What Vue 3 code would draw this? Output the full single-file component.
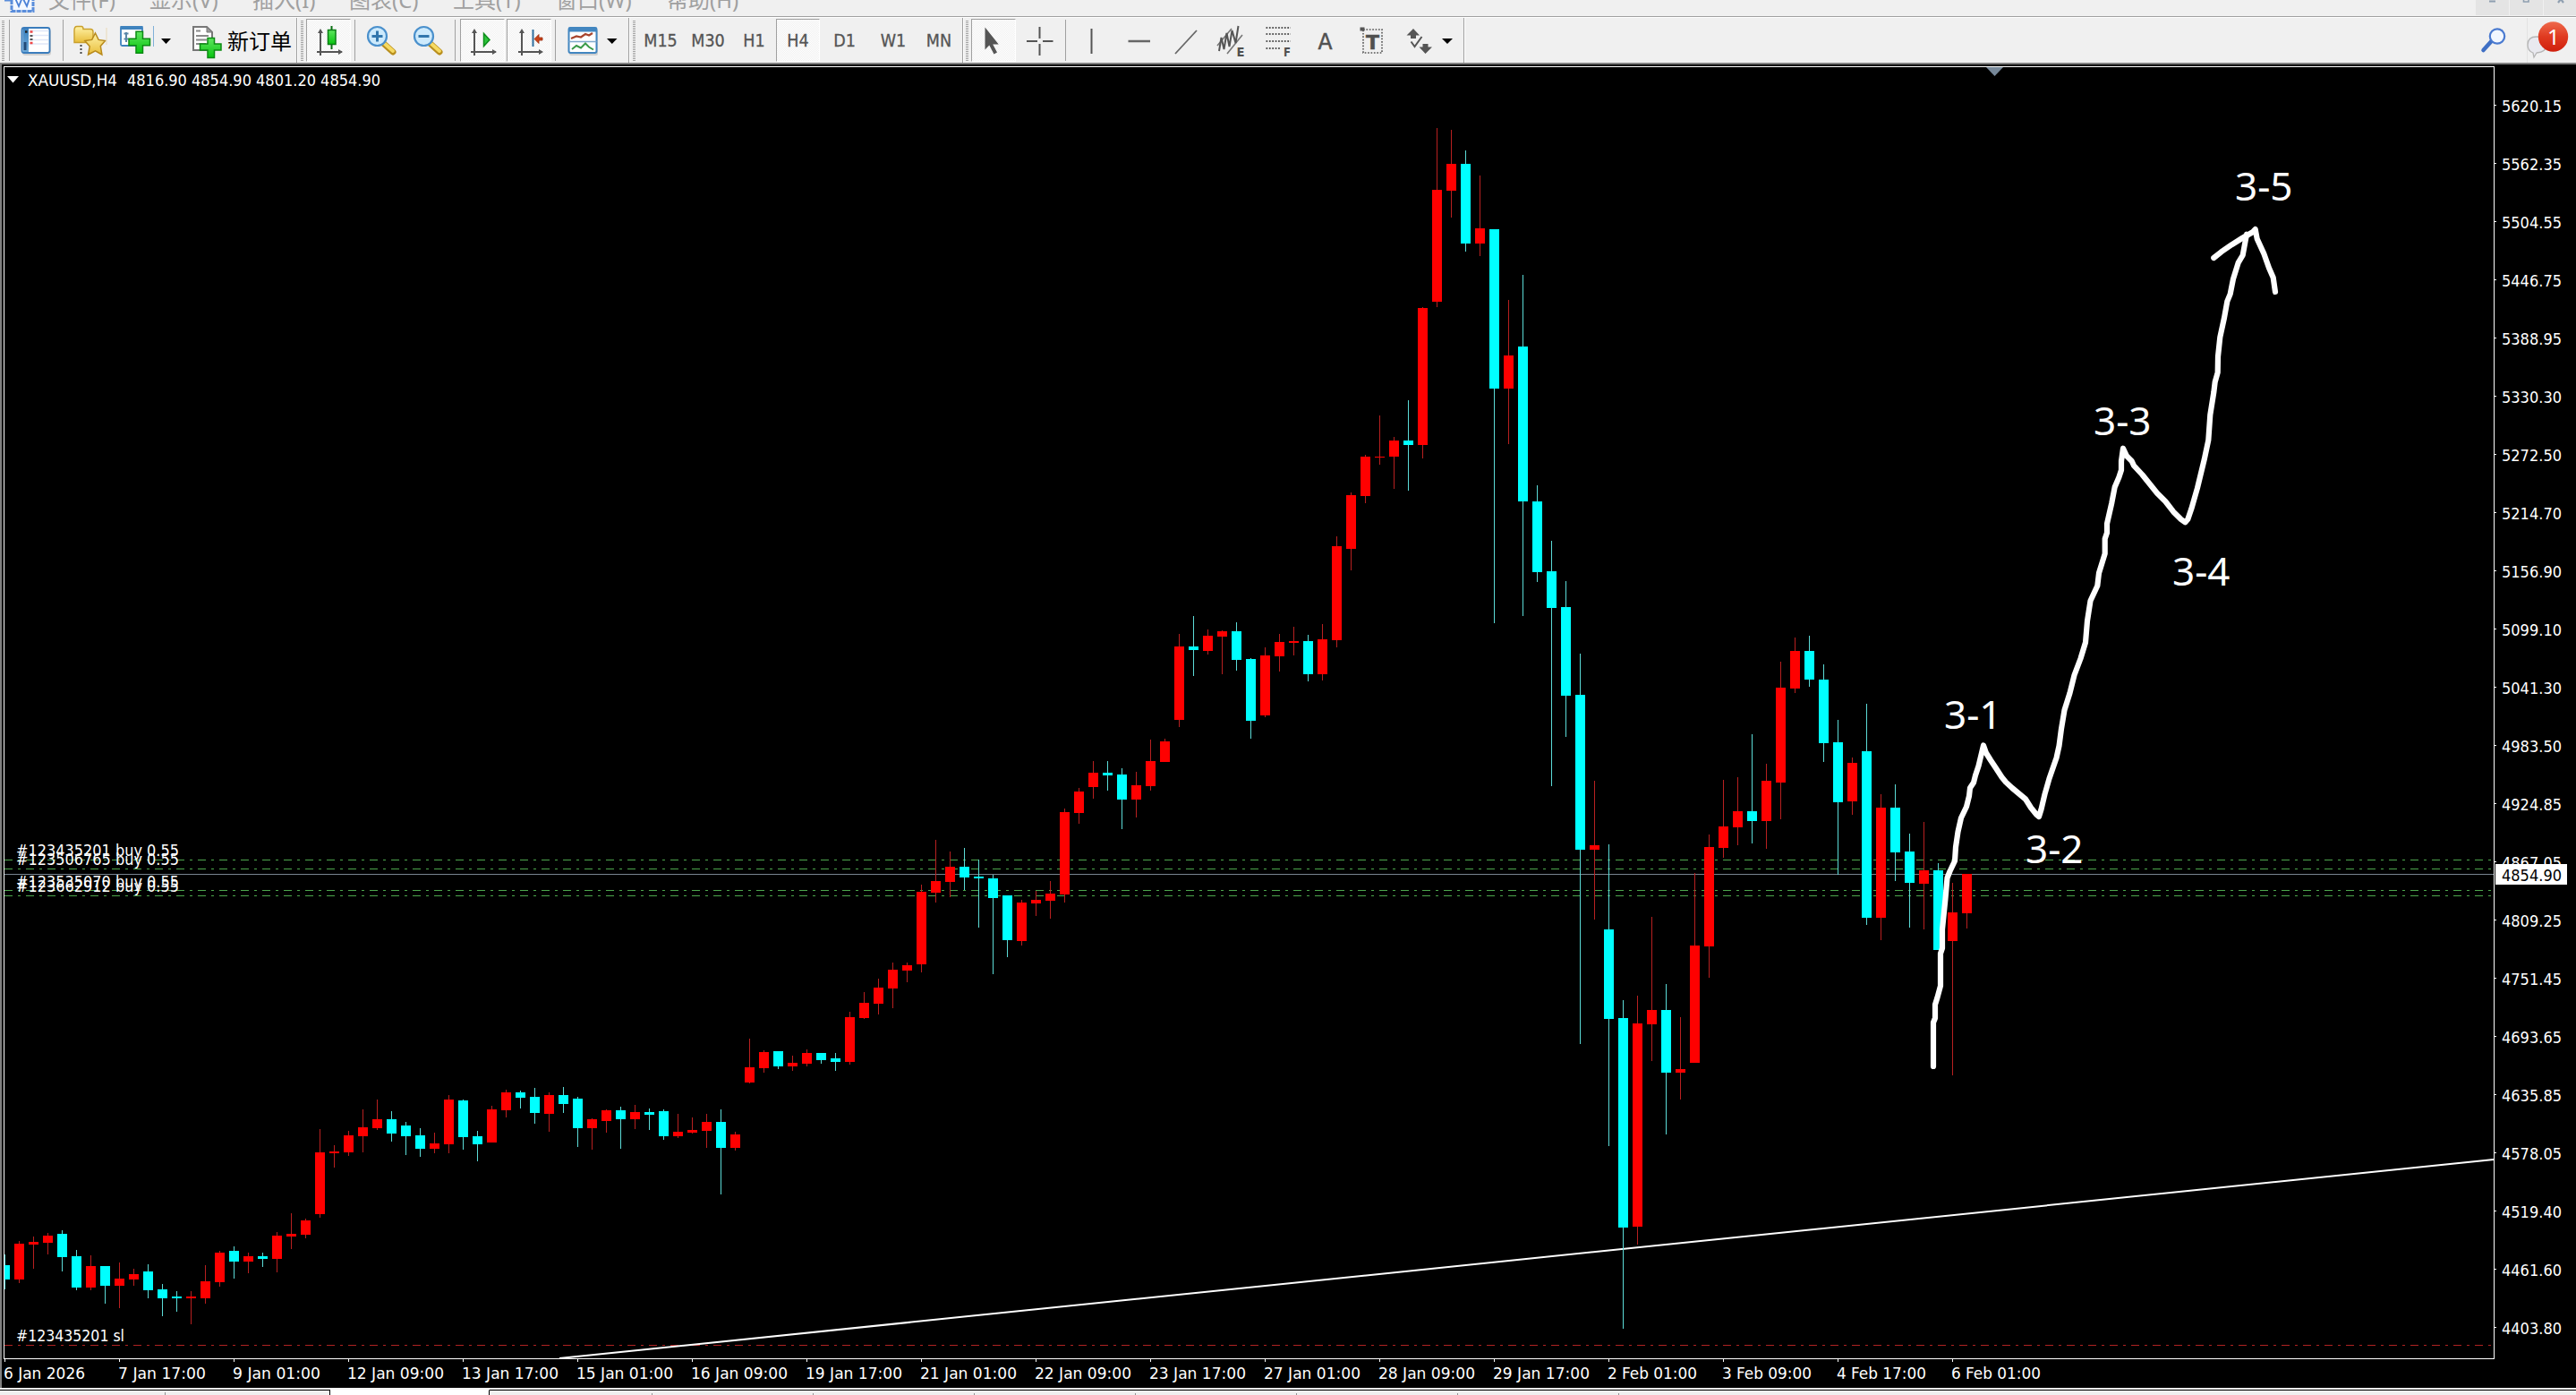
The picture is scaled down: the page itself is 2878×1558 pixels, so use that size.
<script setup>
const menu = [
  { label: '文件(F)', w: 113 },
  { label: '显示(V)', w: 115 },
  { label: '插入(I)', w: 108 },
  { label: '图表(C)', w: 116 },
  { label: '工具(T)', w: 115 },
  { label: '窗口(W)', w: 124 },
  { label: '帮助(H)', w: 110 },
]

const frames = [
  { label: 'M15', w: 52 },
  { label: 'M30', w: 54 },
  { label: 'H1', w: 49 },
  { label: 'H4', w: 49, on: true },
  { label: 'D1', w: 55 },
  { label: 'W1', w: 54 },
  { label: 'MN', w: 48 },
]

// Each bar: direction, high, body top, body bottom, low, in steps of 1/k px below `y`.
const segments = [
  {
    y: 900,
    k: 2.383,
    bars: `c 1194 1222 1261 1287|r 1158 1165 1261 1270|r 1146 1161 1168 1232|r 1137 1144 1163 1194|c 1130 1139 1201 1239
      |c 1182 1199 1282 1289|r 1196 1225 1282 1289|c 1225 1225 1277 1325|r 1215 1258 1277 1337|r 1232 1246 1261 1277
      |c 1220 1239 1289 1311|c 1273 1287 1311 1358|c 1292 1307 1310 1346|r 1292 1307 1310 1380|r 1222 1265 1311 1325
      |r 1184 1189 1268 1280|c 1172 1184 1213 1258|r 1189 1199 1213 1244|c 1189 1199 1206 1227|r 1134 1144 1206 1242
      |r 1084 1139 1146 1180|r 1099 1103 1141 1151|r 860 922 1087 1096|r 903 920 925 963|r 865 877 922 932
      |r 808 855 879 922|r 782 834 858 863|c 813 834 872 894|c 841 851 879 929|c 858 877 913 934
      |r 870 898 913 925|r 770 782 901 925|c 782 784 882 915|c 865 879 901 946|r 798 808 896 896
      |r 755 763 810 829|c 758 763 777 805|c 751 774 817 846|r 763 770 820 867|c 748 770 794 817
      |c 774 779 858 908|r 832 834 858 915|r 808 810 839 870|c 801 810 834 913|r 796 815 834 860
      |c 805 815 822 863|c 808 813 879 889|r 820 867 879 884|r 829 863 870 872|r 820 841 865 910
      |c 808 841 910 1034|r 867 875 910 917|r 620 696 736 739|r 651 655 698 710|c 653 653 693 701
      |r 665 684 693 705|r 648 658 686 693|c 658 658 677 686|c 658 672 682 705|r 548 562 682 689
      |r 496 524 565 567|r 460 484 527 555|r 417 436 486 539|r 417 424 438 469|r 210 229 422 443
      |r 91 200 231 257|r 122 162 203 243|c 112 162 191 224|c 143 188 194 324|c 183 193 245 448
      |c 238 238 357 403|r 250 257 360 372|r 226 250 260 293|r 200 234 253 300|r 7 17 236 257`,
  },
  {
    y: 400,
    k: 2.6133,
    bars: `r 1254 1265 1328 1359|r 1176 1210 1252 1286|c 1176 1210 1218 1262|c 1197 1215 1288 1375|r 1207 1247 1288 1341
      |r 1113 1176 1249 1262|r 1111 1119 1179 1179|r 805 841 1056 1077|c 753 841 852 928|r 792 810 855 865
      |r 794 797 813 923|c 771 797 881 912|c 875 878 1058 1111|r 844 868 1043 1048|r 805 828 870 915
      |r 784 826 831 868|c 808 826 923 943|r 776 821 923 941|r 520 549 823 844|r 392 400 557 619
      |r 282 287 402 423|r 167 287 290 311|r 230 240 287 382|c 123 240 253 387`,
  },
  {
    y: 120,
    k: 2.45,
    bars: `r 546 549 924 960|r 56 225 532 546|r 61 154 228 301|c 118 154 372 394|r 186 331 372 407
      |c 333 333 769 1411|r 527 679 769 921|c 458 654 1078 1392|c 1034 1078 1272 1298|c 1186 1269 1370 1857
      |c 1296 1367 1610 1723`,
  },
  {
    y: 700,
    k: 1.8275,
    bars: `c 55 139 455 852|r 314 446 455 598|c 444 618 800 1060|c 762 799 1226 1433|r 753 810 1224 1261
      |r 592 782 811 886|c 729 782 910 1036|r 797 903 910 965|r 503 651 890 890|r 424 450 652 716
      |r 313 408 451 471|r 307 376 409 446|c 219 376 397 442|r 280 314 397 453|r 71 124 318 393
      |r 22 49 126 135|c 18 49 108 122|c 77 108 238 276|c 190 236 358 506|r 267 278 356 384
      |c 157 254 594 609|r 342 369 594 640|c 322 369 461 519|c 422 459 523 614|r 398 497 524 618
      |c 482 497 660 660|r 523 583 641 916|r 504 504 585 616`,
  },
]

const candles = segments
  .flatMap(({ y, k, bars }) =>
    bars.split('|').map((row) => {
      const [kind, ...v] = row.trim().split(' ')
      const [hi, top, bottom, lo] = v.map((n) => Math.round(y + n / k))
      return { kind, hi, top, h: Math.max(1, bottom - top), len: Math.max(1, lo - hi) }
    }),
  )
  .map((c, i) => ({ ...c, x: i * 16 }))

const prices = [
  '5620.15', '5562.35', '5504.55', '5446.75', '5388.95', '5330.30', '5272.50', '5214.70', '5156.90', '5099.10', '5041.30',
  '4983.50', '4924.85', '4867.05', '4809.25', '4751.45', '4693.65', '4635.85', '4578.05', '4519.40', '4461.60', '4403.80',
].map((label, i) => ({ label, y: 117 + i * 65 }))

const dates = [
  '6 Jan 2026', '7 Jan 17:00', '9 Jan 01:00', '12 Jan 09:00', '13 Jan 17:00', '15 Jan 01:00', '16 Jan 09:00',
  '19 Jan 17:00', '21 Jan 01:00', '22 Jan 09:00', '23 Jan 17:00', '27 Jan 01:00', '28 Jan 09:00', '29 Jan 17:00',
  '2 Feb 01:00', '3 Feb 09:00', '4 Feb 17:00', '6 Feb 01:00',
].map((label, i) => ({
  label,
  x: 5 + i * 128,
  w: i === 0 ? 91 : label.includes('Feb') ? 100 : label.length === 11 ? 98 : 108,
}))

const orders = [
  { label: '#123435201 buy 0.55', y: 956, w: 182 },
  { label: '#123506765 buy 0.55', y: 966, w: 182 },
  { label: '#123535070 buy 0.55', y: 991, w: 182 },
  { label: '#123662912 buy 0.55', y: 996, w: 182 },
  { label: '#123435201 sl', y: 1498, w: 121 },
]

const waves = [
  { label: '3-1', x: 2172, y: 814 },
  { label: '3-2', x: 2263, y: 964 },
  { label: '3-3', x: 2339, y: 486 },
  { label: '3-4', x: 2427, y: 654 },
  { label: '3-5', x: 2497, y: 224 },
]

const path =
  '2160,1191 2160,1142 2162,1137 2162,1122 2164.5,1114 2168,1101 2168,1065 2170,1059 2170,1038 2173.5,1003.5 2175.5,980.5 2178.5,973 2184,961.5 2185,946 2187.5,929 2191,913.5 2197,901 2200,889 2201,880 2205,874 2207,866 2210.5,855.5 2213,845 2216,832.5 2219,841 2224,849 2230,858 2236.5,868 2241,873.5 2248,880 2254,885 2263,892.5 2269,902 2275,909.5 2278,912 2280.5,904 2284.5,887 2289.5,869.5 2297.5,846.5 2300.5,833 2303,814 2306.5,793 2312.5,774 2317.5,754 2324.5,735.5 2330,717.5 2332,693.5 2335.5,671 2343.3,654.3 2345,640 2351.7,618.3 2351.7,601.7 2354,595 2354,585 2359.3,561.7 2362.7,544 2367.3,533.3 2370,525 2370,515 2372,500.7 2376,509.3 2381.7,515 2384,520 2393.3,530 2410,550.7 2419.3,560 2428.3,571.7 2436.7,580 2441.3,583.3 2444.3,580 2448.3,568.3 2455,545 2462.7,513.3 2467.3,491.7 2469.3,463.3 2473.3,438.3 2474.7,426.7 2477.7,416 2478,398.3 2480.3,376.7 2485,355 2488.3,336.7 2491.7,328.3 2495,311.7 2500.7,293.3 2505.7,285 2510,261.7'
const head =
  '2473.3,288 2481.7,281.3 2493.3,273.3 2505,266 2516.7,259.3 2519.7,256 2521.7,266.7 2529.3,283.3 2535,299.3 2539.7,310 2542,326'

const tabs = [369, 178, 182, 180, 180, 180, 180, 180, 180]
</script>

<template>
  <div class="window">
    <header class="menubar">
      <svg class="app-icon" width="54" height="18" viewBox="0 0 54 18">
        <rect x="13" y="-10" width="24" height="22.5" fill="#f4f8ff" stroke="#5b8edb" stroke-width="3" stroke-dasharray="5 1" />
        <path d="M5 0.5h7" stroke="#5b8edb" stroke-width="2" />
        <path d="M17 -2l4 9 4-10 5 10 4-12" fill="none" stroke="#4a80d6" stroke-width="1.8" />
      </svg>
      <span v-for="m in menu" :key="m.label" class="menu-item" :style="{ width: m.w + 'px' }">{{ m.label }}</span>
      <div class="win-buttons">
        <i><svg width="37" height="16"><path d="M15 1.5h7" stroke="#8f9fb0" stroke-width="2" /></svg></i>
        <i><svg width="37" height="16"><path d="M15.5 -3v5h5.500v-5" fill="none" stroke="#8f9fb0" stroke-width="1.6" /></svg></i>
        <i><svg width="37" height="16"><path d="M16 3l3-4 3 4" fill="none" stroke="#8f9fb0" stroke-width="2.200" /></svg></i>
      </div>
    </header>

    <div class="toolbar">
      <section class="group g1">
        <b class="grip"></b>
        <b class="sep"></b>
        <svg width="59" height="50" viewBox="11 20 59 50">
          <defs>
            <linearGradient id="blue" x1="0" x2="0" y1="0" y2="1"><stop offset="0" stop-color="#3d82bf" /><stop offset="1" stop-color="#6da9d8" /></linearGradient>
            <linearGradient id="green" x1="0" x2="0" y1="0" y2="1"><stop offset="0" stop-color="#5fe65f" /><stop offset="1" stop-color="#08c410" /></linearGradient>
            <linearGradient id="gold" x1="0" x2="0" y1="0" y2="1"><stop offset="0" stop-color="#fff3a8" /><stop offset="1" stop-color="#e8bd3a" /></linearGradient>
          </defs>
          <rect x="25" y="33" width="32" height="29" rx="3" fill="#0002" />
          <rect x="24.500" y="31" width="31" height="28" rx="2.500" fill="#fff" stroke="#3a7cbc" stroke-width="1.800" />
          <rect x="25.500" y="32" width="6.500" height="26" fill="url(#blue)" />
          <path d="M26.500 47h3v9h-3z" fill="#234a78" />
          <path d="M33 34.500h21M33 39.500h21M33 44.500h21M33 49h21" stroke="#dfe6f8" stroke-width="1.500" />
          <path d="M28 35.500h2.500" stroke="#222" stroke-width="2.500" />
          <path d="M33.500 35.500h3M33.500 48h3" stroke="#f04848" stroke-width="2.500" />
          <path d="M33.500 40h3M33.500 44h3" stroke="#555" stroke-width="2" />
        </svg>
        <b class="sep"></b>
        <svg width="55" height="50" viewBox="71 20 55 50">
          <path d="M83 34q0-4.500 3-4.500h5q2 0 2 3h8q3 0 3 3v12H83z" fill="url(#gold)" stroke="#c9a02c" stroke-width="1.400" />
          <path d="M90.500 50v12" stroke="#444" stroke-width="2" stroke-dasharray="2 2" />
          <path d="M106.500 37l3.600 7.400 7.400 1.200-5.200 5.800 1.600 9.600-7.400-4.200-8 4.200 1.700-9.200-5.400-6.200 7.900-1.200z" fill="url(#gold)" stroke="#b88a1c" stroke-width="1.500" />
          <path d="M119 31v19" stroke="#e9d9b8" />
        </svg>
        <svg width="50" height="50" viewBox="126 20 50 50">
          <rect x="135" y="30" width="24" height="21" rx="1.500" fill="#fff" stroke="#3f83be" stroke-width="1.800" />
          <path d="M134.500 31h25" stroke="#3f83be" stroke-width="4" />
          <path d="M141 36v11M138.500 37.500h5M138.500 43.500h5" stroke="#5b87a8" stroke-width="2" fill="none" />
          <path d="M152 35.500h7.500v8h8v7.500h-8V59.500h-7.500V51h-8v-7.500h8z" transform="translate(0 -.3)" fill="url(#green)" stroke="#0b8a12" stroke-width="1.500" />
          <path d="M171.500 29v23" stroke="#7fb0d8" />
        </svg>
        <svg width="20" height="50" viewBox="176 20 20 50"><path d="M180 43h11l-5.500 6z" /></svg>
        <svg width="56" height="50" viewBox="196 20 56 50">
          <path d="M216 30h15l6 6v20h-21z" fill="#fff" stroke="#777" stroke-width="2" />
          <path d="M231 30v6h6z" fill="#999" stroke="#777" />
          <path d="M219 34.500h5M219 40h14M219 44.500h12M219 49h11" stroke="#8a8a8a" stroke-width="2" />
          <path d="M232 42.500h7.500V49h7.500v7h-7.500v8.500H232V56h-8.500v-7h8.500z" fill="url(#green)" stroke="#0b8a12" stroke-width="1.500" />
        </svg>
        <span class="order">新订单</span>
      </section>

      <section class="group g2">
        <b class="grip"></b>
        <div class="pressed">
          <svg width="48" height="46" viewBox="343 22 48 46">
            <path d="M358 34v28M354 58h28" stroke="#555" stroke-width="2" fill="none" />
            <path d="M355 37l3-5 3 5zM378 55l5 3-5 3z" fill="#555" />
            <path d="M370.500 29v26" stroke="#0a6e12" stroke-width="2" />
            <rect x="366.500" y="33.500" width="8.500" height="16" fill="url(#green)" stroke="#0a7d14" stroke-width="1.500" />
          </svg>
        </div>
        <b class="sep ml4"></b>
        <svg width="55" height="50" viewBox="397 20 55 50">
          <path d="M429 49l10 9" stroke="#b98f1e" stroke-width="7" stroke-linecap="round" />
          <path d="M430 49l9 8" stroke="#f6da62" stroke-width="4" stroke-linecap="round" />
          <circle cx="421.500" cy="40.500" r="10.500" fill="#cdeafc" stroke="#4a90cc" stroke-width="2.200" />
          <path d="M415.500 40.500h12M421.500 34.500v12" stroke="#3277ad" stroke-width="3" />
        </svg>
        <svg width="56" height="50" viewBox="452 20 56 50">
          <path d="M481 49l10 9" stroke="#b98f1e" stroke-width="7" stroke-linecap="round" />
          <path d="M482 49l9 8" stroke="#f6da62" stroke-width="4" stroke-linecap="round" />
          <circle cx="473.500" cy="40.500" r="10.500" fill="#cdeafc" stroke="#4a90cc" stroke-width="2.200" />
          <path d="M467.500 40.500h12" stroke="#3277ad" stroke-width="3" />
        </svg>
        <b class="sep"></b>
        <div class="pressed ml5">
          <svg width="48" height="46" viewBox="515 22 48 46">
            <path d="M530 34v28M526 58h28" stroke="#555" stroke-width="2" fill="none" />
            <path d="M527 37l3-5 3 5zM550 55l5 3-5 3z" fill="#555" />
            <path d="M540.500 37.500v14l6.500-7z" fill="#2cc43a" stroke="#0c8c1a" stroke-width="1.500" />
          </svg>
        </div>
        <div class="pressed ml2">
          <svg width="48" height="46" viewBox="567 22 48 46">
            <path d="M583 34v28M579 58h26" stroke="#555" stroke-width="2" fill="none" />
            <path d="M580 37l3-5 3 5zM602 55l5 3-5 3z" fill="#555" />
            <path d="M595.500 33v19" stroke="#2f6f9f" stroke-width="2" />
            <path d="M597 43.500l5-5v3.500h4v3h-4v3.500z" fill="#c8431a" stroke="#9a2c0c" stroke-width=".8" />
          </svg>
        </div>
        <b class="sep ml4"></b>
        <svg width="54" height="50" viewBox="621 20 54 50">
          <rect x="636" y="33" width="32" height="29" rx="2" fill="#0002" />
          <rect x="635.500" y="31" width="31" height="28" rx="2" fill="#fff" stroke="#4286c0" stroke-width="2" />
          <path d="M635.500 33h31" stroke="#4286c0" stroke-width="5" />
          <path d="M635.500 46.500h31" stroke="#7fa9cc" stroke-width="1.500" />
          <path d="M638 43l6-2.500 5 1 5-3.500 4 1.500 4-2.500" fill="none" stroke="#a8442c" stroke-width="2.200" />
          <path d="M639 55l5-4 5 2.500 5-5 4 4 5 3" fill="none" stroke="#3a9a48" stroke-width="2" />
        </svg>
        <svg width="24" height="50" viewBox="675 20 24 50"><path d="M678 43h11.500l-5.700 6z" /></svg>
      </section>

      <section class="group g3">
        <b class="grip"></b>
        <span v-for="f in frames" :key="f.label" class="frame" :class="{ on: f.on }" :style="{ width: f.w + 'px' }">{{ f.label }}</span>
      </section>

      <section class="group g4">
        <b class="grip"></b>
        <div class="pressed">
          <svg width="48" height="46" viewBox="1086 22 48 46">
            <path d="M1100.500 30.500v25l4.800-5 5.200 10 3.500-2-4.800-9h6.500z" fill="#555" />
          </svg>
        </div>
        <svg width="55" height="50" viewBox="1135 20 55 50">
          <path d="M1161.500 30v13M1161.500 49v13M1147 46h12M1165 46h11.500" stroke="#555" stroke-width="2" />
        </svg>
        <b class="sep"></b>
        <svg width="54" height="50" viewBox="1191 20 54 50"><path d="M1219.500 32v28" stroke="#555" stroke-width="2" /></svg>
        <svg width="52" height="50" viewBox="1245 20 52 50"><path d="M1260.500 46h24.500" stroke="#666" stroke-width="2.500" /></svg>
        <svg width="54" height="50" viewBox="1297 20 54 50"><path d="M1313 60l24-26" stroke="#666" stroke-width="1.800" /></svg>
        <svg width="54" height="50" viewBox="1351 20 54 50">
          <path d="M1360 51l16-19M1371 60l17-21" stroke="#777" stroke-width="1.600" />
          <path d="M1362 57l2.500-15 3 13 3-18 3 15 3-18 4 14 3-19" fill="none" stroke="#555" stroke-width="2" />
          <text class="sub" x="1381.500" y="63" textLength="9" lengthAdjust="spacingAndGlyphs">E</text>
        </svg>
        <svg width="54" height="50" viewBox="1405 20 54 50">
          <path d="M1414.500 31h27.500M1414.500 38h27.500M1414.500 46h27.500M1414.500 54h17" stroke="#555" stroke-width="2" stroke-dasharray="1.700 1.700" />
          <text class="sub" x="1434" y="63" textLength="8" lengthAdjust="spacingAndGlyphs">F</text>
        </svg>
        <svg width="50" height="50" viewBox="1459 20 50 50"><text class="glyph" x="1472.500" y="55" textLength="16" lengthAdjust="spacingAndGlyphs">A</text></svg>
        <svg width="50" height="50" viewBox="1509 20 50 50">
          <rect x="1523" y="33" width="21" height="26" fill="none" stroke="#555" stroke-width="1.600" stroke-dasharray="1.700 1.700" />
          <path d="M1519.500 30.500h5v4h-5z" fill="#555" />
          <text class="glyph tee" x="1526" y="55" textLength="15" lengthAdjust="spacingAndGlyphs">T</text>
        </svg>
        <svg width="50" height="50" viewBox="1559 20 50 50">
          <path d="M1579 32l7 7.500h-4v3.500h-6v-3.500h-4.500zM1592.500 60l-7-7.500h4v-3.500h6v3.500h4.500z" fill="#555" />
          <path d="M1576.500 46.500l4 5.500 8-11" fill="none" stroke="#555" stroke-width="2" />
        </svg>
        <svg width="26" height="50" viewBox="1609 20 26 50"><path d="M1611 43h12l-6 6z" /></svg>
      </section>

      <section class="right">
        <svg width="112" height="50" viewBox="2766 20 112 50">
          <defs>
            <linearGradient id="badge" x1="0" x2="0" y1="0" y2="1"><stop offset="0" stop-color="#ee6a4c" /><stop offset=".5" stop-color="#e03a20" /><stop offset="1" stop-color="#cf1f0c" /></linearGradient>
          </defs>
          <path d="M2774.500 56l9-10" stroke="#3f6fc4" stroke-width="4.500" stroke-linecap="round" />
          <circle cx="2790" cy="40.500" r="8.200" fill="#f2f7ff" stroke="#4a7ad0" stroke-width="2.200" />
          <path d="M2823.500 20v50" stroke="#e2e2e2" />
          <path d="M2824 50q0-9 10-9 11 0 11 9 0 8-11 9l-3 5-1-5q-6-2-6-9z" fill="#e9e9ef" stroke="#b5b5b5" stroke-width="1.300" />
          <circle cx="2852.500" cy="41" r="16.700" fill="url(#badge)" />
          <text class="badge" x="2846" y="50">1</text>
        </svg>
      </section>
    </div>

    <main class="chart">
      <svg width="2878" height="1480" viewBox="0 70 2878 1480">
        <path d="M0 71H2878M1 71V1550" stroke="#808080" stroke-width="2" />

        <g class="frame-lines">
          <rect x="4" y="74" width="2783" height="1" />
          <rect x="4" y="74" width="1" height="1444" />
          <rect x="4" y="1517" width="2783" height="1" />
          <rect x="2786" y="74" width="1" height="1444" />
          <rect v-for="p in prices" :key="p.y" x="2787" :y="p.y" width="2" height="1" />
          <rect v-for="d in dates" :key="d.x" :x="d.x" y="1518" width="1" height="3" />
        </g>

        <g stroke="#4da64d" stroke-dasharray="9 6 3 6">
          <path d="M5 960.500H2785M5 970.500H2785M5 994.500H2785M5 1000.500H2785" />
          <path d="M5 1502.500H2785" stroke="#b02222" />
        </g>
        <path d="M5 976.500H2786" stroke="#788490" />
        <path d="M625 1517L2786 1295" stroke="#fff" stroke-width="2" />

        <g v-for="c in candles" :key="c.x" :class="c.kind">
          <rect class="wick" :x="c.x + 5" :y="c.hi" width="1" :height="c.len" />
          <rect :x="c.x || 5" :y="c.top" :width="c.x ? 11 : 6" :height="c.h" />
        </g>

        <path d="M2219 75h19l-9.500 10z" fill="#778899" />
        <path d="M8 85h13l-6.500 7.500z" fill="#fff" />

        <g class="label">
          <text x="31" y="96" textLength="100" lengthAdjust="spacingAndGlyphs">XAUUSD,H4</text>
          <text x="142" y="96" textLength="283" lengthAdjust="spacingAndGlyphs">4816.90 4854.90 4801.20 4854.90</text>
          <text v-for="o in orders" :key="o.y" x="18" :y="o.y" :textLength="o.w" lengthAdjust="spacingAndGlyphs">{{ o.label }}</text>
          <text v-for="p in prices" :key="p.label" x="2795" :y="p.y + 8" textLength="67" lengthAdjust="spacingAndGlyphs">{{ p.label }}</text>
          <text v-for="d in dates" :key="d.label" :x="d.x - 1" y="1540" :textLength="d.w" lengthAdjust="spacingAndGlyphs">{{ d.label }}</text>
          <rect x="2788" y="965" width="80" height="23" fill="#fff" />
          <text class="bid" x="2795" y="984" textLength="67" lengthAdjust="spacingAndGlyphs">4854.90</text>
        </g>

        <g fill="none" stroke="#fff" stroke-width="6.200" stroke-linejoin="round" stroke-linecap="round">
          <polyline :points="path" />
          <polyline :points="head" />
        </g>
        <text v-for="w in waves" :key="w.label" class="wave" :x="w.x" :y="w.y">{{ w.label }}</text>
      </svg>
    </main>

    <footer class="tabs">
      <i v-for="(w, i) in tabs" :key="i" :class="{ active: i === 1, first: i === 0 }" :style="{ width: w + 'px' }">
        <u v-if="i === 0"></u>
      </i>
      <i class="rest"></i>
    </footer>
  </div>
</template>

<style>
body {
  overflow: hidden;
  background: #f0f0f0;
}
</style>

<style scoped>
.window {
  width: 2878px;
  height: 1558px;
  overflow: hidden;
  display: flex;
  flex-direction: column;
  background: #f0f0f0;
  font-family: 'DejaVu Sans Condensed', 'DejaVu Sans', sans-serif;
  font-stretch: condensed;
}
svg {
  display: block;
  flex: none;
}
.menubar {
  flex: none;
  box-sizing: border-box;
  height: 19px;
  display: flex;
  align-items: flex-start;
  overflow: hidden;
  border-bottom: 1px solid #a0a0a0;
}
.menu-item {
  flex: none;
  margin-top: -15px;
  font: 24px/30px 'Noto Sans', 'Noto Sans CJK SC', sans-serif;
  color: #a0a0a0;
  white-space: nowrap;
}
.win-buttons {
  margin-left: auto;
  display: flex;
  gap: 1px;
}
.win-buttons i {
  width: 37px;
  height: 17px;
  background: #e4e4e4;
}
.win-buttons i:last-child {
  width: 36px;
  overflow: hidden;
}
.toolbar {
  flex: none;
  box-sizing: border-box;
  height: 51px;
  border-top: 1px solid #fff;
  display: flex;
}
.group {
  flex: none;
  box-sizing: border-box;
  height: 50px;
  display: flex;
  align-items: flex-start;
  border-right: 1px solid #a0a0a0;
  box-shadow: 1px 0 #fff;
}
.g1 { width: 332px; }
.g2 { width: 371px; }
.g3 { width: 373px; }
.g4 { width: 560px; }
.grip {
  flex: none;
  width: 3px;
  height: 46px;
  margin: 3px 5px 0 2px;
  background: repeating-linear-gradient(#a4a4a4 0 1px, #f0f0f0 1px 2px);
}
.g2 .grip,
.g3 .grip,
.g4 .grip {
  margin: 3px 3px 0 4px;
}
.g4 .grip {
  margin-left: 3px;
}
.sep {
  flex: none;
  width: 1px;
  height: 46px;
  margin-top: 2px;
  background: #a0a0a0;
}
.ml2 { margin-left: 2px; }
.ml4 { margin-left: 4px; }
.ml5 { margin-left: 5px; }
.order {
  font: 24px/50px 'Noto Sans CJK SC', sans-serif;
  color: #000;
  margin-left: 2px;
  white-space: nowrap;
}
.pressed,
.frame.on {
  flex: none;
  box-sizing: border-box;
  height: 48px;
  margin-top: 1px;
  border: 1px solid;
  border-color: #a0a0a0 #fff #fff #a0a0a0;
  background: repeating-conic-gradient(#fff 0 25%, #f0f0f0 0 50%) 0 0 / 2px 2px;
}
.pressed {
  width: 50px;
}
.frame {
  flex: none;
  height: 50px;
  line-height: 52px;
  font-size: 19.5px;
  text-align: center;
  color: #555;
  -webkit-text-stroke: 0.3px #555;
}
.g3 .grip + .frame {
  margin-left: -1px;
}
.frame.on {
  line-height: 48px;
}
.sub,
.glyph,
.badge {
  font-family: 'DejaVu Sans Condensed', 'DejaVu Sans', sans-serif;
  fill: #505050;
}
.sub {
  font-size: 14px;
  font-weight: 700;
}
.glyph {
  font-size: 25px;
  stroke: #505050;
  stroke-width: 0.5px;
}
.tee {
  font-size: 22px;
  font-weight: 700;
}
.badge {
  font: 24px 'Noto Sans', sans-serif;
  fill: #fff;
}
.right {
  margin-left: auto;
}
.chart {
  flex: none;
  height: 1480px;
  background: #000;
}
.frame-lines {
  fill: #fff;
}
.r { fill: #f00; }
.c { fill: #0ff; }
.r .wick { fill: #b82020; }
.c .wick { fill: #5cdcd8; }
.label {
  font-size: 18.3px;
  fill: #fff;
}
.bid {
  fill: #000;
}
.wave {
  font: 44px 'Noto Sans', sans-serif;
  fill: #fff;
}
.tabs {
  flex: none;
  box-sizing: border-box;
  height: 8px;
  display: flex;
  background: #f0f0f0;
  border-top: 2px solid #f4f4f4;
}
.tabs i {
  flex: none;
  box-sizing: border-box;
  height: 6px;
  border-top: 1px solid #000;
  display: flex;
  justify-content: center;
  background: linear-gradient(#909090, #909090) right 3px / 1px 3px no-repeat #f0f0f0;
}
.tabs i.first {
  background: #f0f0f0;
  border-right: 1px solid #000;
}
.tabs u {
  width: 1px;
  height: 3px;
  margin-top: 2px;
  background: #909090;
}
.tabs i.active {
  background: #fff;
  border-top-color: #fff;
  border-right: 1px solid #000;
}
.tabs i.rest {
  flex: 1;
  background: #f0f0f0;
}
</style>
